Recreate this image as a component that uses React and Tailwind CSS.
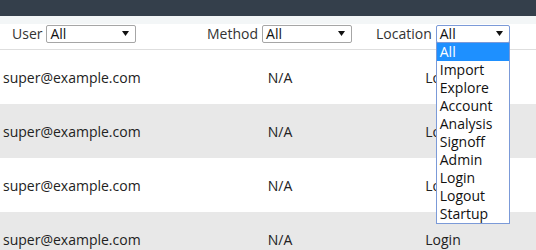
import React from "react";

const rows = [
  { user: "super@example.com", method: "N/A", location: "Login" },
  { user: "super@example.com", method: "N/A", location: "Login" },
  { user: "super@example.com", method: "N/A", location: "Login" },
  { user: "super@example.com", method: "N/A", location: "Login" },
];

const locations = [
  "All",
  "Import",
  "Explore",
  "Account",
  "Analysis",
  "Signoff",
  "Admin",
  "Login",
  "Logout",
  "Startup",
];

function Arrow() {
  return (
    <svg width="7" height="5" viewBox="0 0 7 5" className="shrink-0">
      <path d="M0 0h7L3.5 5z" fill="#111" />
    </svg>
  );
}

function FakeSelect({ width, focused }) {
  return (
    <div
      className={`flex h-[18px] items-center justify-between rounded-[2px] border bg-white pl-[3px] pr-[6px] text-[14px] leading-none text-[#111] ${
        focused ? "border-[#7b9ad8]" : "border-[#a6a6a6]"
      } ${width}`}
    >
      <span>All</span>
      <Arrow />
    </div>
  );
}

export default function App() {
  return (
    <div
      className="h-[250px] w-[536px] overflow-hidden bg-white text-[#2b2b2b]"
      style={{ fontFamily: '"Open Sans", "Noto Sans", sans-serif' }}
    >
      <div className="h-[16px] bg-[#343f4b]" />
      <div className="h-[8px] bg-[#f3f6f7]" />

      {/* filters */}
      <div className="flex h-[26px] items-center border-b border-[#dedede] pb-[6px] text-[14px] text-[#333]">
        <div className="flex w-[207px] items-center gap-[4px] pl-[12px]">
          <span>User</span>
          <FakeSelect width="w-[90px]" />
        </div>
        <div className="flex w-[169px] items-center gap-[4px]">
          <span>Method</span>
          <FakeSelect width="w-[90px]" />
        </div>
        <div className="relative flex items-center gap-[4px]">
          <span>Location</span>
          <div className="relative">
            <FakeSelect width="w-[74px]" focused />
            <div className="absolute left-0 top-[17px] z-10 w-[74px] border border-[#7b9ad8] bg-white">
              {locations.map((loc, i) => (
                <div
                  key={loc}
                  className={`flex h-[18px] items-center pl-[3px] text-[14px] leading-none ${
                    i === 0 ? "bg-[#1e90ff] text-white" : "text-[#111]"
                  }`}
                >
                  {loc}
                </div>
              ))}
            </div>
          </div>
        </div>
      </div>

      {/* table */}
      <div>
        {rows.map((row, i) => (
          <div
            key={i}
            className={`grid h-[54px] grid-cols-[210px_140px_186px] items-center text-[14px] text-[#222] ${
              i % 2 === 1 ? "bg-[#e8e8e8]" : "bg-white"
            }`}
          >
            <div className="pl-[3px]">{row.user}</div>
            <div className="text-center">{row.method}</div>
            <div className="text-center">{row.location}</div>
          </div>
        ))}
      </div>
    </div>
  );
}
